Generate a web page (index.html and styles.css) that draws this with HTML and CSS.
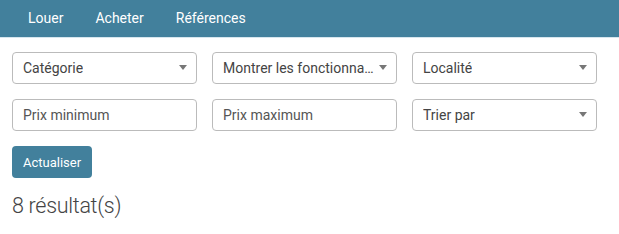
FILE: index.html
```html
<!DOCTYPE html>
<html lang="fr">
<head>
    <meta charset="UTF-8">
    <meta name="viewport" content="width=device-width, initial-scale=1.0">
    <title>Annonces</title>
    <link rel="stylesheet" href="styles.css">
</head>
<body>

    <!-- Navigation -->
    <div class="navbar">
        <a href="#">Louer</a>
        <a href="#">Acheter</a>
        <a href="#">Références</a>
    </div>

    <!-- Filtres -->
    <div class="filters">
        <div class="filter-grid">
            <div class="select-box"><span>Catégorie</span></div>
            <div class="select-box"><span>Montrer les fonctionnalités</span></div>
            <div class="select-box"><span>Localité</span></div>

            <input type="text" placeholder="Prix minimum">
            <input type="text" placeholder="Prix maximum">
            <div class="select-box"><span>Trier par</span></div>
        </div>

        <button class="btn-update" type="button">Actualiser</button>

        <h2 class="results">8 résultat(s)</h2>
    </div>

</body>
</html>
```

FILE: styles.css
```css
/* Basic reset */
* {
    margin: 0;
    padding: 0;
    box-sizing: border-box;
}

body {
    font-family: Roboto, "Liberation Sans", sans-serif;
    background-color: #fff;
    color: #444;
}

.navbar {
    background-color: #42809c;
    border-bottom: 1px solid #d6e6ee;
    height: 38px;
    padding: 0 16px 0 28px;
    display: flex;
    align-items: center;
    gap: 32px;
}

.navbar a {
    color: #fff;
    text-decoration: none;
    font-size: 14px;
    padding-bottom: 2px;
}

.filters {
    padding: 14px 22px 0 12px;
}

.filter-grid {
    display: grid;
    grid-template-columns: repeat(3, 185px);
    column-gap: 15px;
    row-gap: 15px;
}

.select-box,
.filter-grid input {
    height: 32px;
    border: 1px solid #bbb;
    border-radius: 4px;
    font-family: inherit;
    font-size: 14px;
    color: #444;
    background: #fff;
}

.select-box {
    position: relative;
    display: flex;
    align-items: center;
    padding: 0 22px 0 10px;
}

.select-box span {
    white-space: nowrap;
    overflow: hidden;
    text-overflow: ellipsis;
}

.select-box::after {
    content: "";
    position: absolute;
    right: 9px;
    top: 12px;
    border-left: 4px solid transparent;
    border-right: 4px solid transparent;
    border-top: 5px solid #777;
}

.filter-grid input {
    padding: 0 10px;
    outline: none;
}

.filter-grid input::placeholder {
    color: #555;
}

.btn-update {
    margin-top: 15px;
    height: 32px;
    padding: 0 11px;
    background-color: #42809c;
    color: #fff;
    border: none;
    border-radius: 4px;
    font-family: inherit;
    font-size: 13px;
    cursor: pointer;
}

.results {
    margin-top: 15px;
    font-size: 21.5px;
    font-weight: 300;
    letter-spacing: -0.3px;
    color: #444;
}
```
